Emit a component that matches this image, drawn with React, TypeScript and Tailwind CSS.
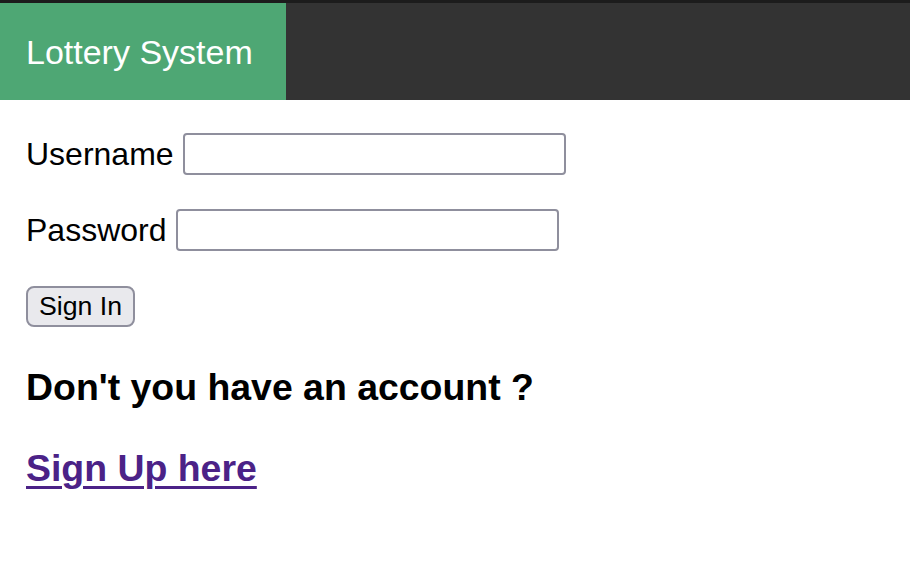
import React from 'react';

const font = { fontFamily: '"Liberation Sans", Arial, sans-serif' };

const Field: React.FC<{ label: string; type?: string }> = ({ label, type = 'text' }) => (
  <div className="flex items-center gap-[9px] h-[42px]">
    <label className="text-[32px] leading-[42px] text-black">{label}</label>
    <input
      type={type}
      className="w-[383px] h-[42px] border-2 border-[#8f8f9d] rounded-[4px] bg-white outline-none px-2 text-[26px]"
    />
  </div>
);

export default function App() {
  return (
    <div className="min-h-[582px] bg-white" style={font}>
      <div className="border-t-[3px] border-[#1c1c1c] bg-[#333333] flex h-[100px]">
        <div className="bg-[#4ea774] h-full pl-[26px] pr-[33px] flex items-center">
          <span className="text-white text-[34px] leading-none">Lottery System</span>
        </div>
      </div>

      <div className="pl-[26px] pt-[33px] flex flex-col items-start">
        <Field label="Username" />
        <div className="mt-[34px]">
          <Field label="Password" type="password" />
        </div>
        <button className="mt-[35px] h-[41px] px-[11px] border-2 border-[#8f8f9d] rounded-[8px] bg-[#e9e9ed] text-black text-[26.67px] leading-none">
          Sign In
        </button>
        <h3 className="mt-[39px] text-[37.44px] leading-[43px] font-bold text-black">Don't you have an account ?</h3>
        <a href="#" className="mt-[38px] text-[37.44px] leading-[43px] font-bold text-[#4b2287] underline underline-offset-[5px] decoration-[3px]">
          Sign Up here
        </a>
      </div>
    </div>
  );
}
